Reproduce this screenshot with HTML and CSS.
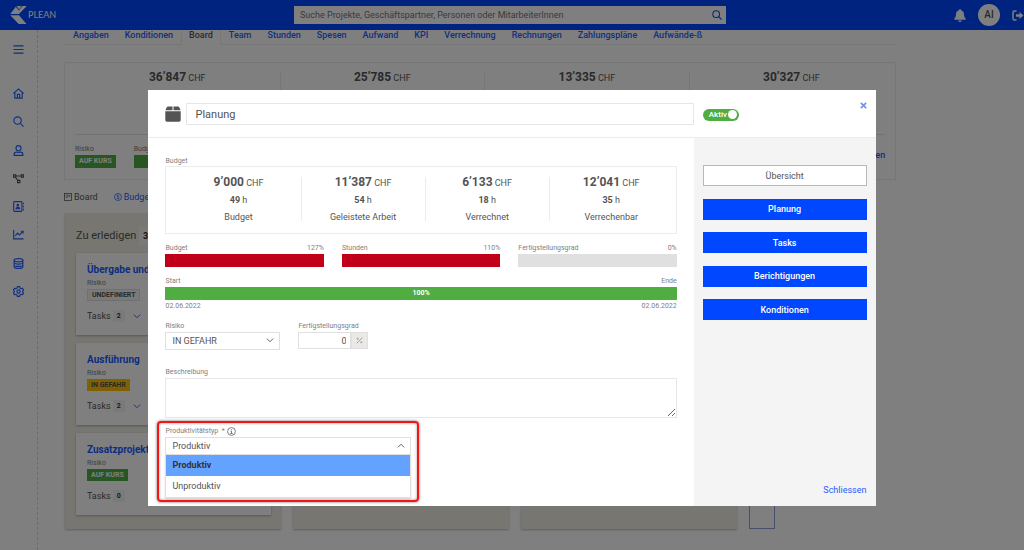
FILE: index.html
```html
<!DOCTYPE html>
<html lang="de">
<head>
<meta charset="utf-8">
<meta name="viewport" content="width=device-width, initial-scale=1">
<title>Plean – Board</title>
<link rel="stylesheet" href="styles.css">
</head>
<body>
<header class="topbar">
  <a class="brand" href="#">
    <svg class="brand-mark" viewBox="0 0 18 20"><path d="M7 0.5h5.200l-2.600 3.600z"/><path d="M13 0.500h4.800L9.500 9H0.300L6.200 1.300l3.300 3.900z"/><path d="M0.300 10.200h9.200l8 9.300H9.200z"/></svg>
    <span>PLEAN</span>
  </a>
  <form class="search">
    <input type="text" aria-label="Suche" placeholder="Suche Projekte, Geschäftspartner, Personen oder MitarbeiterInnen">
    <button type="button" aria-label="Suchen"><svg class="icon-s" viewBox="0 0 24 24"><circle cx="10" cy="10" r="8"/><path d="M16 16l7 7"/></svg></button>
  </form>
  <div class="account">
    <button type="button" aria-label="Benachrichtigungen"><svg class="bell" viewBox="0 0 24 26"><path d="M12 0c1 0 1.700.8 1.700 1.700v.8c4 .8 6.300 4 6.300 8 0 5 1.500 6.500 3.300 8.500.8 1 .2 2.500-1.300 2.500H2C.5 21.500 0 20 .7 19 2.500 17 4 15.500 4 10.500c0-4 2.300-7.200 6.300-8v-.8C10.300.8 11 0 12 0z"/><path d="M8.500 23h7a3.500 3 0 0 1-7 0z"/></svg></button>
    <span class="avatar">AI</span>
    <button type="button" aria-label="Abmelden"><svg class="logout" viewBox="0 0 24 22" stroke="#fff" stroke-width="3"><path d="M9 2H5a3 3 0 0 0-3 3v12a3 3 0 0 0 3 3h4"/><path d="M8 8.500h7V4l8 7-8 7v-4.500H8z" fill="#fff" stroke="none"/></svg></button>
  </div>
</header>

<div class="page">
  <nav class="rail" aria-label="Hauptmenü">
    <a href="#" aria-label="Menü"><svg class="icon" viewBox="0 0 24 24"><path d="M1 4h22M1 12h22M1 20h22"/></svg></a>
    <div class="rail-list">
      <a href="#" aria-label="Start"><svg class="icon" viewBox="0 0 24 24"><path d="M1 12L12 2l11 10M4 10v12h16V10M9.500 22v-8h5v8"/></svg></a>
      <a href="#" aria-label="Suche"><svg class="icon" viewBox="0 0 24 24"><circle cx="10" cy="10" r="8"/><path d="M16 16l7 7"/></svg></a>
      <a href="#" aria-label="Personen"><svg class="icon" viewBox="0 0 24 24"><circle cx="12" cy="7" r="5.500"/><path d="M2.500 22.500v-2c0-3 2-5 5-5 1.500 0 2.500.7 4.500.7s3-.7 4.500-.7c3 0 5 2 5 5v2z"/></svg></a>
      <a href="#" aria-label="Projekte"><svg class="icon icon-dark" viewBox="0 0 24 24"><path d="M1 4h5v5H1zM18 4h5v5h-5zM10 16h5v5h-5zM6 6.500h12M5 9l6 7"/></svg></a>
      <a href="#" aria-label="Kontakte"><svg class="icon" viewBox="0 0 24 24"><rect x="1.500" y="1.500" width="18" height="21" rx="2"/><path d="M23 4v3M23 10.500v3M23 17v3"/><circle cx="10.500" cy="9" r="1.800" fill="currentColor"/><path d="M6.500 17c0-4 8-4 8 0z" fill="currentColor"/></svg></a>
      <a href="#" aria-label="Auswertungen"><svg class="icon" viewBox="0 0 24 24"><path d="M1.500 2v19.500H23M5 15l5-6 4 4 8-8M17 5h5v5"/></svg></a>
      <a href="#" aria-label="Daten"><svg class="icon" viewBox="0 0 24 24"><ellipse cx="12" cy="5" rx="9.500" ry="3.500"/><path d="M2.500 5v14c0 5 19 5 19 0V5M2.500 10c0 4.500 19 4.500 19 0M2.500 15c0 4.500 19 4.500 19 0"/></svg></a>
      <a href="#" aria-label="Einstellungen"><svg class="icon" viewBox="0 0 24 24"><path d="M9.500 1.500h5l.8 3 2.400 1.400 3-.9 2.300 4.200-2.100 2.200v1.200l2.100 2.200-2.300 4.200-3-.9-2.400 1.400-.8 3h-5l-.8-3-2.400-1.400-3 .9L1 14.800l2.100-2.200v-1.200L1 9.200 3.300 5l3 .9 2.400-1.400z"/><circle cx="12" cy="12" r="3.500"/></svg></a>
    </div>
  </nav>

  <main class="content">
    <nav class="tabs" aria-label="Projekt">
      <a href="#">Angaben</a><a href="#">Konditionen</a><a href="#" class="active">Board</a><a href="#">Team</a><a href="#">Stunden</a><a href="#">Spesen</a><a href="#">Aufwand</a><a href="#">KPI</a><a href="#">Verrechnung</a><a href="#">Rechnungen</a><a href="#">Zahlungspläne</a><a href="#">Aufwände-ß</a>
    </nav>

    <section class="summary">
      <div class="totals">
        <p><b>36’847</b> CHF</p><p><b>25’785</b> CHF</p><p><b>13’335</b> CHF</p><p><b>30’327</b> CHF</p>
      </div>
      <div class="states">
        <div class="state"><span class="label">Risiko</span><span class="tag green">AUF KURS</span></div>
        <div class="state"><span class="label">Budget</span><span class="tag green blank"></span></div>
        <a class="edit" href="#">Bearbeiten</a>
      </div>
    </section>

    <nav class="views" aria-label="Ansicht">
      <a href="#" class="current"><svg class="view-icon" viewBox="0 0 16 16"><rect x="1" y="1" width="14" height="14"/><path d="M4 4h3v5H4zM9.500 4h2.500v3H9.500z" stroke-width="1"/></svg>Board</a>
      <a href="#"><svg class="view-icon" viewBox="0 0 16 16"><circle cx="8" cy="8" r="7"/><path d="M10.500 5.500c-1-1.500-5-1.200-5 .7 0 2.300 5 1.200 5 3.500 0 2-4 2.200-5 .5M8 3v10" stroke-width="1"/></svg>Budget</a>
    </nav>

    <div class="board">
      <section class="column">
        <h2>Zu erledigen <span class="count">3</span></h2>
        <article class="card">
          <h3>Übergabe und</h3><span class="label">Risiko</span><span class="tag grey">UNDEFINIERT</span>
          <p class="tasks">Tasks <span class="count">2</span><svg class="chev" viewBox="0 0 12 8"><path d="M1 1l5 5 5-5"/></svg></p>
        </article>
        <article class="card">
          <h3>Ausführung</h3><span class="label">Risiko</span><span class="tag amber">IN GEFAHR</span>
          <p class="tasks">Tasks <span class="count">2</span><svg class="chev" viewBox="0 0 12 8"><path d="M1 1l5 5 5-5"/></svg></p>
        </article>
        <article class="card">
          <h3>Zusatzprojekt</h3><span class="label">Risiko</span><span class="tag green">AUF KURS</span>
          <p class="tasks">Tasks <span class="count">0</span></p>
        </article>
      </section>
      <section class="column"></section>
      <section class="column"></section>
      <div class="add-column"></div>
    </div>
  </main>
</div>

<div class="overlay">
  <div class="dialog" role="dialog" aria-modal="true" aria-label="Planung">
    <div class="dialog-head">
      <div class="head-main">
        <svg class="box-icon" viewBox="0 0 16 16"><path d="M3.500 0.500h4v3.700H0.500l1-2.500C1.900.8 2.500.5 3.500.5zM8.500.5h4c1 0 1.600.3 2 1.200l1 2.500h-7z"/><path d="M.3 5.200h15.400V14c0 1-.7 1.700-1.700 1.700H2C1 15.700.3 15 .3 14z"/></svg>
        <input class="name" type="text" aria-label="Name" value="Planung">
      </div>
      <div class="head-side">
        <label class="toggle"><input type="checkbox" role="switch" checked><span>Aktiv</span></label>
        <button class="close" type="button" aria-label="Dialog schliessen"><svg viewBox="0 0 8 8"><path d="M1 1l6 6M7 1L1 7"/></svg></button>
      </div>
    </div>

    <div class="dialog-body">
      <div class="form">
        <span class="label">Budget</span>
        <div class="figures">
          <div><p class="amount"><b>9’000</b> CHF</p><p><b>49</b> h</p><p>Budget</p></div>
          <div><p class="amount"><b>11’387</b> CHF</p><p><b>54</b> h</p><p>Geleistete Arbeit</p></div>
          <div><p class="amount"><b>6’133</b> CHF</p><p><b>18</b> h</p><p>Verrechnet</p></div>
          <div><p class="amount"><b>12’041</b> CHF</p><p><b>35</b> h</p><p>Verrechenbar</p></div>
        </div>

        <div class="meters">
          <div><p class="pair"><span>Budget</span><span>127%</span></p><div class="bar red"></div></div>
          <div><p class="pair"><span>Stunden</span><span>110%</span></p><div class="bar red"></div></div>
          <div><p class="pair"><span>Fertigstellungsgrad</span><span>0%</span></p><div class="bar"></div></div>
        </div>

        <div class="period">
          <p class="pair"><span>Start</span><span>Ende</span></p>
          <div class="bar full">100%</div>
          <p class="pair"><span>02.06.2022</span><span>02.06.2022</span></p>
        </div>

        <div class="fields">
          <div class="risk">
            <label class="label" for="risk">Risiko</label>
            <div class="select"><select id="risk"><option>IN GEFAHR</option></select><svg class="chev" viewBox="0 0 12 8"><path d="M1 1l5 5 5-5"/></svg></div>
          </div>
          <div class="degree">
            <label class="label" for="degree">Fertigstellungsgrad</label>
            <div class="percent"><input id="degree" type="text" value="0"><span><svg viewBox="0 0 10 10"><path d="M1 9l8-8"/><circle cx="2.500" cy="2.500" r=".8"/><circle cx="7.500" cy="7.500" r=".8"/></svg></span></div>
          </div>
        </div>

        <label class="label" for="description">Beschreibung</label>
        <textarea id="description"></textarea>

        <div class="productivity">
          <div class="label-row"><label class="label" for="type">Produktivitätstyp&nbsp; *</label><svg class="info" viewBox="0 0 18 18"><circle cx="9" cy="9" r="7.800"/><path d="M7 8h2v5M6.500 13h5M9 4.500v1.500"/></svg></div>
          <div class="select"><select id="type"><option>Produktiv</option><option>Unproduktiv</option></select><svg class="chev" viewBox="0 0 12 8"><path d="M1 7l5-5 5 5"/></svg></div>
          <ul class="menu" role="listbox" aria-label="Produktivitätstyp">
            <li role="option" aria-selected="true">Produktiv</li>
            <li role="option" aria-selected="false">Unproduktiv</li>
          </ul>
        </div>
      </div>

      <aside class="side">
        <div class="actions">
          <button type="button" class="plain">Übersicht</button>
          <button type="button">Planung</button>
          <button type="button">Tasks</button>
          <button type="button">Berichtigungen</button>
          <button type="button">Konditionen</button>
        </div>
        <a class="dismiss" href="#">Schliessen</a>
      </aside>
    </div>
  </div>
</div>
</body>
</html>
```
FILE: styles.css
```css
* { box-sizing: border-box; }
body {
  margin: 0;
  min-height: 100vh;
  overflow: hidden;
  display: flex;
  flex-direction: column;
  font: 9px/12px Roboto, "Liberation Sans", sans-serif;
  color: #545454;
  background: #fff;
}
p, h2, h3, ul { margin: 0; padding: 0; }
a { color: #2460ff; text-decoration: none; }
button, input, select, textarea { font: inherit; color: inherit; margin: 0; border-radius: 0; }
button { border: 0; padding: 0; background: none; }
svg { display: block; fill: none; }

.topbar {
  flex: none;
  height: 30px;
  display: flex;
  align-items: center;
  justify-content: space-between;
  padding: 0 0 0 10px;
  background: #0047ff;
}
.brand { display: flex; align-items: center; gap: 1px; width: 284px; color: #fff; font: 9px/14px Lato, sans-serif; }
.brand-mark { width: 17px; height: 20px; fill: #fff; }
.search { flex: 1; display: flex; max-width: 432px; height: 18px; background: #fff; padding: 0 4px 0 6px; }
.search input { flex: 1; min-width: 0; border: 0; padding: 0; background: none; outline: 0; }
.search input::placeholder { color: #757575; opacity: 1; }
.search button { color: #0047ff; }
.icon-s { width: 10px; height: 10px; stroke: currentColor; stroke-width: 2.500; }
.account { display: flex; align-items: center; gap: 12px; width: 298px; justify-content: flex-end; overflow: hidden; }
.bell { width: 12px; height: 13px; fill: #fff; }
.avatar { width: 22px; height: 22px; border-radius: 50%; background: #fff; text-align: center; font: 500 10px/22px Roboto, sans-serif; }
.logout { width: 12px; height: 11px; }

.page { flex: 1; display: flex; }
.rail { flex: none; width: 38px; padding: 14px 0 0 13px; border-right: 1px dashed #d8d8d8; }
.icon { width: 11px; height: 11px; stroke: currentColor; stroke-width: 2.500; }
.icon-dark { color: #545454; }
.rail-list { display: flex; flex-direction: column; justify-content: space-between; height: 209px; margin-top: 33px; }

.content { flex: none; width: 84%; padding: 0 2px 0 26px; }
.tabs { display: flex; height: 15px; padding-left: 1px; border-bottom: 1px solid #efefef; font-weight: 500; line-height: 10px; white-space: nowrap; }
.tabs a { padding: 0 7px; border: 1px solid transparent; border-width: 0 1px; height: 15px; }
.tabs .active { color: #545454; border-color: #efefef; background: #fff; }

.summary { height: 118px; margin-top: 17px; padding: 8px 10px 10px; border: 1px solid #ececec; display: flex; flex-direction: column; }
.totals { flex: 1; display: grid; grid-template-columns: repeat(4, 1fr); margin: 0 -8px 10px 0; text-align: center; }
.totals p + p { border-left: 1px solid #ececec; }
b { font-weight: 700; }
.totals b, .amount b { font-size: 12px; }
.states { display: flex; gap: 18px; height: 35px; padding-top: 9px; border-top: 1px solid #e4e4e4; }
.states .tag { line-height: 13px; margin-top: 1px; }
.states .blank { width: 42px; height: 13px; }
.label { display: block; font-size: 7px; line-height: 10px; color: #808080; }
.tag { display: table; padding: 0 4px; font-size: 7px; line-height: 12px; font-weight: 700; color: #fff; }
.green { background: #50ad42; }
.amber { background: #ffc107; color: #545454; }
.grey { background: #f4f4f4; color: #545454; border: 1px solid #e0e0e0; line-height: 10px; }
.edit { margin: 5px 0 0 auto; font-weight: 500; }
.views { display: flex; gap: 16px; margin: 11px 0 10px; }
.views a { display: flex; align-items: center; gap: 2px; }
.views .current { color: #545454; }
.view-icon { width: 8px; height: 8px; stroke: currentColor; stroke-width: 1.500; }

.board { display: flex; gap: 12px; padding-left: 1px; }
.column { flex: none; width: 26%; padding: 14px 10px 14px 11px; background: #f0ece0; box-shadow: 0 1px 2px #0004; }
.column h2 { font: 11px/18px Roboto, sans-serif; margin-bottom: 8px; }
.count { display: inline-block; padding: 0 4px; background: #f4f4f4; color: #333; font-weight: 700; font-size: 9px; }
.card { height: 82px; margin-bottom: 8px; padding: 10px 11px; background: #fff; box-shadow: 0 1px 2px #0004; }
.card:last-child { margin-bottom: 0; }
.card h3 { font: 700 10px/14px Roboto, sans-serif; color: #1a5aff; margin-bottom: 1px; }
.card .tag { margin-top: 1px; }
.tasks { display: flex; align-items: center; gap: 2px; margin-top: 9px; }
.tasks .count { font-size: 7px; }
.chev { width: 8px; height: 5px; stroke: currentColor; stroke-width: 1.500; }
.tasks .chev { color: #2460ff; margin-left: 6px; }
.add-column { width: 26px; border: 1px solid #8f9fd8; }

.overlay { position: fixed; inset: 0; background: rgba(0, 0, 0, .5); }
.dialog { width: 71%; margin: 90px auto 0; background: #fff; display: flex; flex-direction: column; min-height: 416px; }
.dialog-head { display: grid; grid-template-columns: 3fr 1fr; height: 48px; border-bottom: 1px solid #ececec; }
.head-main { display: flex; align-items: center; gap: 5px; padding-left: 17px; }
.box-icon { width: 16px; height: 16px; fill: #545454; }
.name { flex: 1; min-width: 0; height: 22px; border: 1px solid #e6e6e6; padding: 1px 8px 0; font-size: 11px; }
.head-side { display: flex; align-items: center; justify-content: space-between; padding: 2px 9px 0; }
.toggle { display: flex; align-items: center; height: 12px; padding: 0 2px 0 6px; gap: 1px; flex-direction: row-reverse; border-radius: 6px; background: #50ad42; color: #fff; font-size: 8px; font-weight: 500; }
.toggle input { appearance: none; width: 9px; height: 9px; border-radius: 50%; background: #fff; }
.close { align-self: flex-start; margin-top: 10px; color: #6c93ff; }
.close svg { width: 7px; height: 7px; stroke: currentColor; stroke-width: 2; }

.dialog-body { flex: 1; display: grid; grid-template-columns: 3fr 1fr; }
.form { padding: 18px 17px 50px; }
.figures { display: grid; grid-template-columns: repeat(4, 1fr); padding: 10px 3px 12px 10px; border: 1px solid #ececec; text-align: center; }
.figures > div { display: grid; gap: 5px; height: 44px; align-content: center; }
.figures > div + div { border-left: 1px solid #ececec; }
.meters { display: grid; grid-template-columns: repeat(3, 1fr); gap: 18px; margin: 9px 0; }
.pair { display: flex; justify-content: space-between; font-size: 7px; line-height: 11px; color: #808080; }
.bar { height: 13px; background: #e0e0e0; }
.bar + .pair { margin-top: 1px; }
.red { background: #c00018; }
.full { background: #50ad42; color: #fff; text-align: center; font-size: 7px; line-height: 13px; font-weight: 700; }
.fields { display: flex; gap: 18px; margin: 9px 0 17px; }
.risk { width: 115px; }
.degree { width: 70px; }
.select { position: relative; margin-top: 1px; }
.select select { display: block; width: 100%; height: 18px; padding: 0 6px; border: 1px solid #e0e0e0; background: #fff; appearance: none; outline: 0; }
.select .chev { position: absolute; right: 6px; top: 6px; }
.percent { display: flex; height: 17px; margin-top: 1px; }
.percent input { flex: 1; min-width: 0; border: 1px solid #e0e0e0; padding: 0 4px; text-align: right; }
.percent span { width: 17px; display: grid; place-items: center; background: #ebe9e6; border: 1px solid #e0e0e0; }
.percent svg { width: 7px; height: 7px; stroke: #808080; }
textarea { display: block; width: 100%; height: 40px; margin-top: 1px; border: 1px solid #e6e6e6; resize: vertical; }
.productivity { position: relative; width: 48%; margin-top: 8px; }
.productivity::before { content: ""; position: absolute; inset: -5px -8px -47px; border: 2px solid #f81414; border-radius: 4px; box-shadow: 0 0 3px #0009, inset 0 0 3px #0006; pointer-events: none; }
.label-row { display: flex; align-items: center; gap: 2px; }
.info { width: 9px; height: 9px; stroke: #545454; stroke-width: 1.500; }
.menu { position: absolute; left: 0; right: 0; top: 100%; list-style: none; background: #fff; border: 1px solid #e0e0e0; border-top: 0; box-shadow: 0 1px 2px #0002; }
.menu li { padding: 0 6px; line-height: 21px; }
.menu li[aria-selected="true"] { background: #64a2ff; color: #333; font-weight: 700; }

.side { display: flex; flex-direction: column; justify-content: space-between; padding: 27px 9px 10px; background: #f4f4f4; }
.actions { display: flex; flex-direction: column; justify-content: space-between; height: 155px; }
.actions button { height: 21px; background: #0047ff; color: #fff; font-weight: 500; }
.actions .plain { background: #fff; color: #545454; border: 1px solid #b8b8b8; font-weight: 400; }
.dismiss { align-self: flex-end; }
```
